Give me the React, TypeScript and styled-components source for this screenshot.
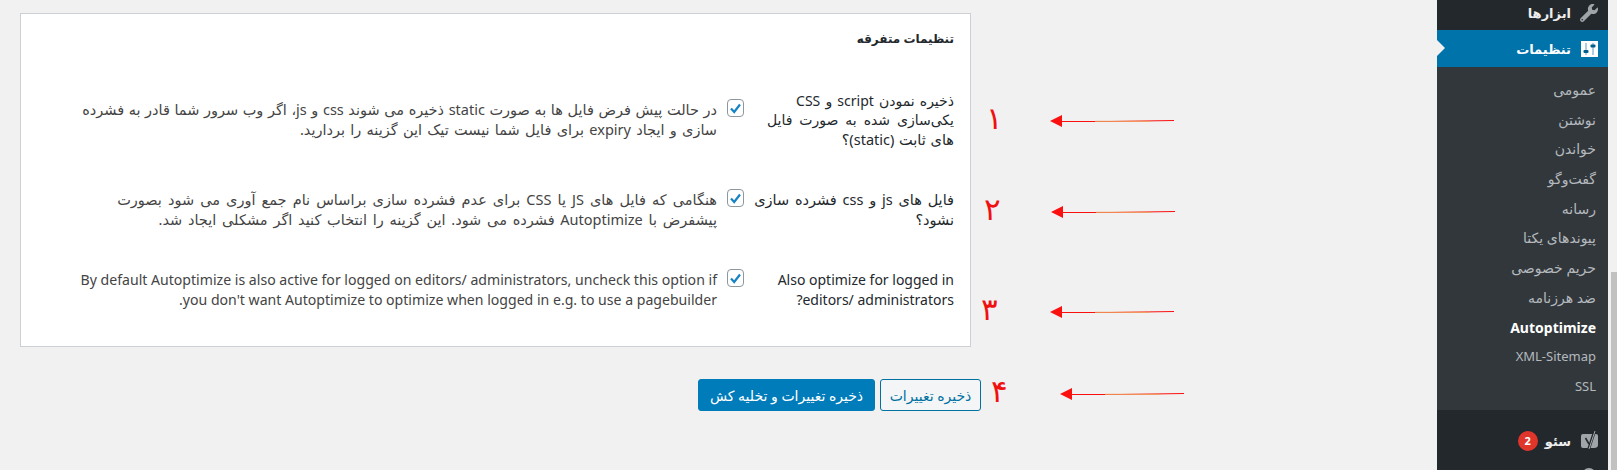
import { ReactNode } from "react";
import styled, { createGlobalStyle } from "styled-components";
import { FaWrench } from "react-icons/fa";

const GlobalStyle = createGlobalStyle`
  html, body {
    margin: 0;
    padding: 0;
    height: 470px;
    overflow: hidden;
    background: #f1f1f1;
  }
`;

const FONT = `"Noto Sans", "DejaVu Sans", sans-serif`;

const Page = styled.div`
  position: relative;
  display: flex;
  width: 1617px;
  height: 470px;
  overflow: hidden;
  background: #f1f1f1;
  font-family: ${FONT};
  font-size: 14px;
  color: #444;
`;

const Main = styled.main`
  flex: 1;
  padding: 13px 0 0 20px;
`;

const Card = styled.section`
  box-sizing: border-box;
  width: 951px;
  height: 334px;
  padding: 0 16px 0 0;
  background: #fff;
  border: 1px solid #ccd0d4;
`;

const CardTitle = styled.h3`
  margin: 0;
  padding-top: 15px;
  height: 56px;
  box-sizing: border-box;
  font-size: 12px;
  line-height: 20px;
  font-weight: 700;
  color: #23282d;
  white-space: nowrap;
`;

const Row = styled.div`
  display: grid;
  grid-template-columns: 200px 1fr;
  column-gap: 10px;
  align-items: center;
  padding: 20.5px 0;
`;

const RowLabel = styled.div`
  line-height: 19.5px;
  color: #23282d;
  white-space: nowrap;
`;

const RowValue = styled.div`
  display: flex;
  align-items: flex-start;
  gap: 10px;
`;

const CheckBox = styled.span`
  flex: none;
  box-sizing: border-box;
  display: flex;
  align-items: center;
  justify-content: center;
  width: 17px;
  height: 18px;
  margin-top: -1px;
  background: #fff;
  border: 1px solid #8c97a0;
  border-radius: 4px;
`;

const Description = styled.div`
  line-height: 19.5px;
  color: #444;
  white-space: nowrap;
`;

const Line = styled.span<{ $size?: number; $ws?: number }>`
  display: block;
  font-size: ${(p) => p.$size ?? 14}px;
  word-spacing: ${(p) => p.$ws ?? 0}px;
`;

const ButtonRow = styled.div`
  display: flex;
  justify-content: flex-start;
  gap: 5px;
  width: 961px;
  margin-top: 32px;
`;

const Button = styled.button<{ $primary?: boolean }>`
  box-sizing: border-box;
  height: 32px;
  width: ${(p) => (p.$primary ? "177px" : "101px")};
  padding: 0;
  border: 1px solid ${(p) => (p.$primary ? "#007cba" : "#0071a1")};
  border-radius: 3px;
  background: ${(p) => (p.$primary ? "#007cba" : "#f3f5f6")};
  color: ${(p) => (p.$primary ? "#fff" : "#0071a1")};
  font-family: ${FONT};
  font-size: 14px;
  white-space: nowrap;
`;

const Sidebar = styled.nav`
  flex: none;
  width: 171px;
  height: 470px;
  overflow: hidden;
  background: #23282d;
`;

const TopItem = styled.div<{ $active?: boolean; $first?: boolean; $spaced?: boolean }>`
  position: relative;
  display: flex;
  align-items: center;
  gap: 8px;
  flex: none;
  height: ${(p) => (p.$first ? "30px" : p.$active ? "37px" : "34px")};
  margin-top: ${(p) => (p.$spaced ? "14px" : "0")};
  padding: ${(p) => (p.$first ? "0 9px 4px 0" : "0 9px 0 0")};
  box-sizing: border-box;
  background: ${(p) => (p.$active ? "#0073aa" : "transparent")};
  color: ${(p) => (p.$active ? "#fff" : "#eee")};
  font-size: 13px;
  font-weight: 700;

  ${(p) =>
    p.$active &&
    `
    &::before {
      content: "";
      position: absolute;
      left: 0;
      top: 10px;
      border: 8.5px solid transparent;
      border-left-color: #f1f1f1;
      border-right-width: 0;
    }
  `}
`;

const IconSlot = styled.span`
  flex: none;
  display: flex;
  align-items: center;
  justify-content: center;
  width: 20px;
  height: 20px;
  color: #a0a5aa;
`;

const Submenu = styled.ul`
  margin: 0;
  padding: 8px 12px 8px 0;
  list-style: none;
  background: #32373c;
`;

const SubItem = styled.li<{ $current?: boolean; $latin?: boolean }>`
  height: 29.7px;
  line-height: 29.7px;
  font-size: ${(p) => (p.$latin ? "13px" : "14px")};
  color: ${(p) => (p.$current ? "#fff" : "#b4b9be")};
  font-weight: ${(p) => (p.$current ? 700 : 400)};
  white-space: nowrap;
`;

const Badge = styled.span`
  display: flex;
  align-items: center;
  justify-content: center;
  width: 20px;
  height: 20px;
  margin-right: -1px;
  border-radius: 50%;
  background: #e0352b;
  color: #fff;
  font-size: 11px;
  font-weight: 700;
`;

const ScrollTrack = styled.div`
  flex: none;
  box-sizing: border-box;
  display: flex;
  width: 9px;
  padding: 272px 0 0 3px;
`;

const ScrollThumb = styled.div`
  flex: 1;
  background: #c1c1c1;
`;

const Digit = styled.span<{ $x: number; $y: number }>`
  position: absolute;
  left: ${(p) => p.$x}px;
  top: ${(p) => p.$y}px;
  font-family: "DejaVu Sans", sans-serif;
  font-size: 31px;
  line-height: 36px;
  color: #f01010;
`;

const ArrowMark = styled.svg<{ $x: number; $y: number }>`
  position: absolute;
  left: ${(p) => p.$x}px;
  top: ${(p) => p.$y}px;
`;

const Arrow = ({ x, y }: { x: number; y: number }) => (
  <ArrowMark $x={x} $y={y} width="125" height="14" viewBox="0 0 125 14">
    <path d="M0 7 L12 1 V13 Z" fill="#fb1010" />
    <path d="M12 7.5 H60 L124 6.5" stroke="#fb1010" strokeWidth="1" fill="none" />
    <path d="M45 7.3 H100" stroke="#f0a060" strokeWidth="1" fill="none" />
  </ArrowMark>
);

const Tick = () => (
  <svg width="13" height="13" viewBox="0 0 13 13">
    <path d="M2 6.5 L5.2 10 L11 2.5" stroke="#1583c4" strokeWidth="2.2" fill="none" />
  </svg>
);

const SettingsIcon = () => (
  <svg width="17" height="16" viewBox="0 0 17 16">
    <rect width="17" height="16" fill="#fff" />
    <path d="M5 2 V14 M12 2 V14" stroke="#5a9cc0" strokeWidth="1" />
    <rect x="2.5" y="9" width="5" height="3" rx="1" fill="#005f8d" />
    <rect x="9.5" y="3.5" width="5" height="3" rx="1" fill="#005f8d" />
  </svg>
);

const YoastIcon = () => (
  <svg width="19" height="20" viewBox="0 0 19 20">
    <path d="M3 3 H16 Q18 3 18 5 V14 Q18 17 14 17 H3 Q1 17 1 15 V5 Q1 3 3 3 Z" fill="#a0a5aa" />
    <path d="M5.5 7 L9 13" stroke="#23282d" strokeWidth="1.6" fill="none" />
    <path d="M14.5 0.5 L8.5 18.5" stroke="#23282d" strokeWidth="2.8" fill="none" />
    <path d="M15 0 L9 18" stroke="#c4c7ca" strokeWidth="0.8" fill="none" />
  </svg>
);

const NextMenuIcon = () => (
  <svg width="14" height="14" viewBox="0 0 14 14">
    <circle cx="7" cy="7" r="7" fill="#a0a5aa" />
  </svg>
);

const subItems = [
  "عمومی",
  "نوشتن",
  "خواندن",
  "گفت‌وگو",
  "رسانه",
  "پیوندهای یکتا",
  "حریم خصوصی",
  "ضد هرزنامه",
  "Autoptimize",
  "XML-Sitemap",
  "SSL",
];

const rows: { label: ReactNode; text: ReactNode }[] = [
  {
    label: (
      <>
        <Line $ws={1.5}>ذخیره نمودن script و CSS</Line>
        <Line $ws={3.3}>یکی‌سازی شده به صورت فایل</Line>
        <Line $size={14.5} $ws={1}>های ثابت (static)؟</Line>
      </>
    ),
    text: (
      <>
        <Line $size={14.5} $ws={0.8}>
          در حالت پیش فرض فایل ها به صورت static ذخیره می شوند css و js، اگر وب سرور شما قادر به فشرده
        </Line>
        <Line $size={14.5} $ws={1.5}>
          سازی و ایجاد expiry برای فایل شما نیست تیک این گزینه را بردارید.
        </Line>
      </>
    ),
  },
  {
    label: (
      <>
        <Line $size={14.5} $ws={2}>فایل های js و css فشرده سازی</Line>
        <Line $size={14.5}>نشود؟</Line>
      </>
    ),
    text: (
      <>
        <Line $size={14.5} $ws={2.3}>
          هنگامی که فایل های JS یا CSS برای عدم فشرده سازی براساس نام جمع آوری می شود بصورت
        </Line>
        <Line $size={14.5} $ws={2}>
          پیشفرض با Autoptimize فشرده می شود. این گزینه را انتخاب کنید اگر مشکلی ایجاد شد.
        </Line>
      </>
    ),
  },
  {
    label: (
      <>
        <Line>Also optimize for logged in</Line>
        <Line>editors/ administrators?</Line>
      </>
    ),
    text: (
      <>
        <Line $size={14.1}>
          By default Autoptimize is also active for logged on editors/ administrators, uncheck this option if
        </Line>
        <Line $size={14.1}>
          you don't want Autoptimize to optimize when logged in e.g. to use a pagebuilder.
        </Line>
      </>
    ),
  },
];

const App = () => (
  <Page>
    <GlobalStyle />
    <Main>
      <Card dir="rtl">
        <CardTitle>تنظیمات متفرقه</CardTitle>
        {rows.map((row, i) => (
          <Row key={i}>
            <RowLabel>{row.label}</RowLabel>
            <RowValue>
              <CheckBox>
                <Tick />
              </CheckBox>
              <Description>{row.text}</Description>
            </RowValue>
          </Row>
        ))}
      </Card>
      <ButtonRow dir="rtl">
        <Button>ذخیره تغییرات</Button>
        <Button $primary>ذخیره تغییرات و تخلیه کش</Button>
      </ButtonRow>
    </Main>
    <Sidebar dir="rtl">
      <TopItem $first>
        <IconSlot>
          <FaWrench size={18} />
        </IconSlot>
        ابزارها
      </TopItem>
      <TopItem $active>
        <IconSlot>
          <SettingsIcon />
        </IconSlot>
        تنظیمات
      </TopItem>
      <Submenu>
        {subItems.map((item) => (
          <SubItem key={item} $current={item === "Autoptimize"} $latin={item === "XML-Sitemap" || item === "SSL"}>
            {item}
          </SubItem>
        ))}
      </Submenu>
      <TopItem $spaced>
        <IconSlot>
          <YoastIcon />
        </IconSlot>
        سئو
        <Badge>2</Badge>
      </TopItem>
      <TopItem>
        <IconSlot>
          <NextMenuIcon />
        </IconSlot>
      </TopItem>
    </Sidebar>
    <ScrollTrack>
      <ScrollThumb />
    </ScrollTrack>
    <Digit $x={986} $y={100}>۱</Digit>
    <Digit $x={984} $y={191}>۲</Digit>
    <Digit $x={981} $y={291}>۳</Digit>
    <Digit $x={991} $y={373}>۴</Digit>
    <Arrow x={1050} y={114} />
    <Arrow x={1051} y={205} />
    <Arrow x={1050} y={305} />
    <Arrow x={1060} y={387} />
  </Page>
);

export default App;
